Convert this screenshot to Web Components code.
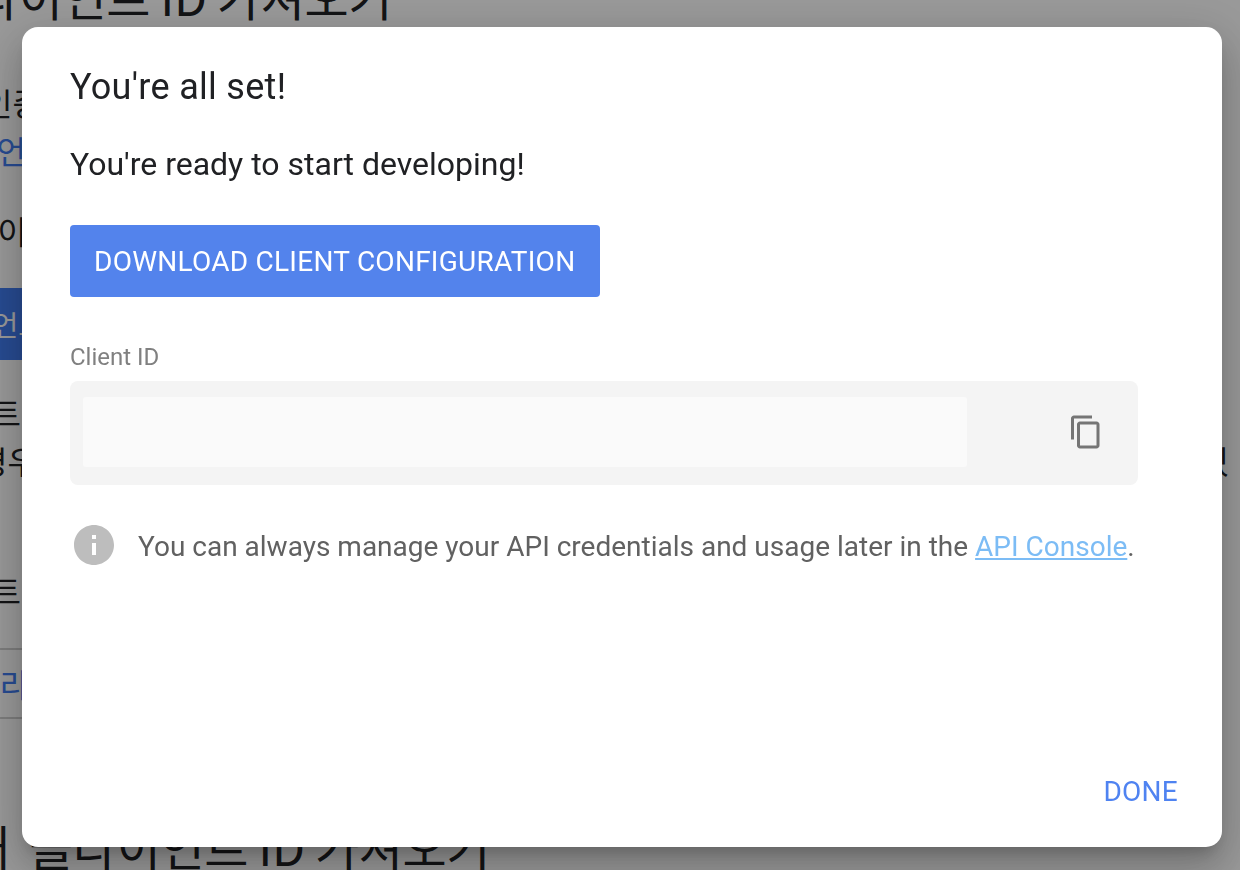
<!DOCTYPE html>
<html lang="en">
<head>
<meta charset="utf-8">
<title>You're all set!</title>
<style>
html,body{margin:0;padding:0;height:100%;overflow:hidden;background:#fff}
body{font-family:Roboto,"Noto Sans CJK KR",sans-serif}
</style>
</head>
<body>
<doc-page></doc-page>
<set-dialog>
  <span slot="title">You're all set!</span>
  <span slot="lead">You're ready to start developing!</span>
  <span slot="action">DOWNLOAD CLIENT CONFIGURATION</span>
  <span slot="label">Client ID</span>
  <copy-field slot="field"></copy-field>
  <info-note slot="note">You can always manage your API credentials and usage later in the <a href="#">API Console</a>.</info-note>
  <span slot="done">DONE</span>
</set-dialog>
<script>
function mk(tag, html){
  customElements.define(tag, class extends HTMLElement{
    constructor(){super();this.attachShadow({mode:'open'}).innerHTML=html;}
  });
}
mk('doc-page', `<style>
:host{display:block;height:870px;overflow:hidden;color:#202124;font-family:"Noto Sans CJK KR",sans-serif;font-weight:400}
.wrap{display:flex;flex-direction:column;margin-top:-41px;width:1240px}
.h,.r,.btn,.line{display:flex;justify-content:flex-end;white-space:nowrap;box-sizing:border-box}
.h{font-size:48px;line-height:72px;height:72px;letter-spacing:-.4px}
.r{font-size:32px;line-height:48px;height:48px}
a{color:#417df3;text-decoration:none}
.btn{background:#417df3;color:#fff;height:72px;line-height:72px;font-size:28px;width:44px}
.line{border-top:2px solid #d0d0d0;border-bottom:2px solid #d0d0d0;height:71px;line-height:67px;font-size:32px;width:1200px;justify-content:flex-start}
.split{display:flex;justify-content:space-between;width:1229px}
.first{margin-right:9px}
</style>
<div class="wrap">
<div class="h" style="width:392px">클라이언트 ID 가져오기</div>
<div class="r" style="width:42px;margin-top:47px">사용자 인증</div>
<div class="r" style="width:26px"><a href="#">프로젝트 언</a></div>
<div class="r" style="width:27px;margin-top:32px">프로젝트 이</div>
<div class="btn" style="margin-top:34px">클라이언트</div>
<div class="r" style="width:21px;margin-top:28px">프로젝트</div>
<div class="split"><div class="r" style="width:37px">프로젝트가 있는 경우</div><div class="r">있</div></div>
<div class="r" style="width:21px;margin-top:82px">프로젝트</div>
<div class="line" style="margin-top:34px"><a href="#">라이브러리</a></div>
<div class="h" style="width:490px;margin-top:90px"><span><span class="first">내</span> 클라이언트 ID 가져오기</span></div>
</div>`);
mk('set-dialog', `<style>
:host{position:fixed;inset:0;display:block;background:rgba(0,0,0,.4)}
.box{box-sizing:border-box;position:absolute;left:22px;top:27px;width:1200px;height:820px;background:#fff;border-radius:16px;
 box-shadow:0 11px 15px -7px rgba(0,0,0,.2),0 24px 38px 3px rgba(0,0,0,.14),0 9px 46px 8px rgba(0,0,0,.12);
 padding:36px 48px 35px;display:flex;flex-direction:column;font-family:Roboto,sans-serif}
.title{font-size:36px;line-height:48px;color:#202124;letter-spacing:.3px}
.lead{font-size:32px;line-height:44px;color:#202124;margin-top:31px}
.act{align-self:flex-start;margin-top:39px;background:#5383ec;color:#fff;border-radius:4px;height:72px;line-height:74px;padding:0 25px 0 24px;font-size:28px;letter-spacing:.26px}
.label{margin-top:46px;font-size:24px;line-height:28px;color:#808080}
.field{margin-top:10px}
.note{margin-top:36px}
.foot{margin-top:auto;display:flex;justify-content:flex-end}
.done{color:#4f83f1;font-size:28px;line-height:40px;letter-spacing:.25px;margin-right:-4px}
</style>
<div class="box">
<div class="title"><slot name="title"></slot></div>
<div class="lead"><slot name="lead"></slot></div>
<div class="act"><slot name="action"></slot></div>
<div class="label"><slot name="label"></slot></div>
<div class="field"><slot name="field"></slot></div>
<div class="note"><slot name="note"></slot></div>
<div class="foot"><div class="done"><slot name="done"></slot></div></div>
</div>`);
mk('copy-field', `<style>
:host{display:flex;box-sizing:border-box;width:1068px;height:104px;background:#f4f4f4;border-radius:8px;padding:16px 20px 18px 13px;align-items:stretch}
.v{width:884px;background:#fafafa;border-radius:3px}
.i{margin-left:auto;align-self:center;margin-right:14px;width:36px;height:36px;fill:#757575;display:block}
</style><div class="v"></div>
<svg class="i" viewBox="0 0 24 24"><path d="M16 1H4c-1.1 0-2 .9-2 2v14h2V3h12V1zm3 4H8c-1.1 0-2 .9-2 2v14c0 1.1.9 2 2 2h11c1.1 0 2-.9 2-2V7c0-1.1-.9-2-2-2zm0 16H8V7h11v14z"/></svg>`);
mk('info-note', `<style>
:host{display:flex;align-items:flex-start;gap:20px;font-size:28px;line-height:48px;color:#616161}
svg{width:48px;height:48px;fill:#bdbdbd;flex:none;display:block}
span{margin-top:2px}
::slotted(a){color:#7cbcf5}
</style>
<svg viewBox="0 0 24 24"><path d="M12 2C6.48 2 2 6.48 2 12s4.48 10 10 10 10-4.48 10-10S17.52 2 12 2zm1 15h-2v-6h2v6zm0-8h-2V7h2v2z"/></svg>
<span><slot></slot></span>`);
</script>
</body>
</html>
